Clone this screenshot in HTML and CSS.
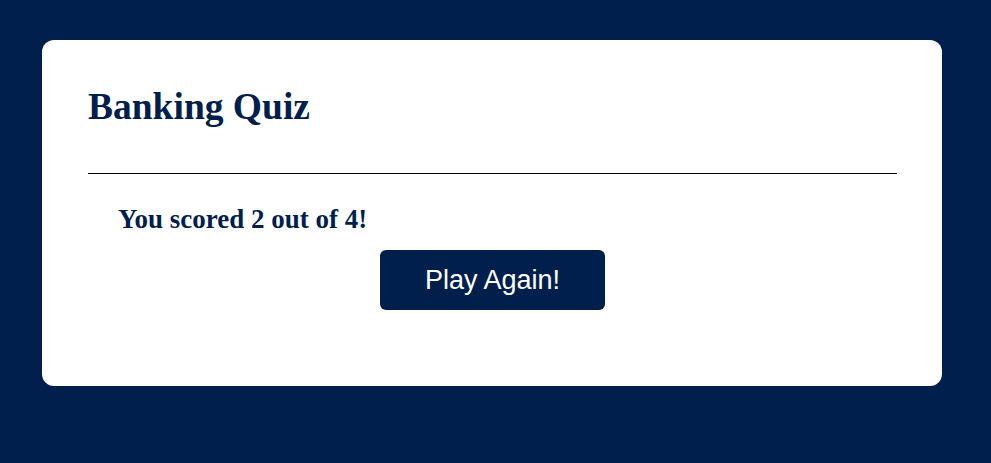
FILE: index.html
```html
<!DOCTYPE html>
<html>
<head>
<meta charset="utf-8">
<link rel="stylesheet" href="styles.css">
</head>
<body>
<div class="card">
  <h1 class="title">Banking Quiz</h1>
  <hr class="rule">
  <div class="result">
    <p class="score">You scored 2 out of 4!</p>
    <button class="again">Play Again!</button>
  </div>
</div>
</body>
</html>
```
FILE: styles.css
```css
html, body {
  margin: 0;
  padding: 0;
  background: #001f4d;
  height: 100%;
}
body {
  padding: 40px 0 0 42px;
  box-sizing: border-box;
}
.card {
  width: 900px;
  height: 346px;
  box-sizing: border-box;
  background: #fff;
  border-radius: 12px;
  padding: 42px 45px 0 46px;
  font-family: "Liberation Serif", "Times New Roman", serif;
  color: #001f4d;
}
.title {
  margin: 0;
  font-size: 37.5px;
  line-height: 50px;
  font-weight: bold;
}
.rule {
  margin: 41px 0 0;
  border: 0;
  border-top: 1px solid #000;
  height: 0;
}
.result {
  display: flex;
  flex-direction: column;
}
.score {
  margin: 28px 0 0 30px;
  font-size: 27px;
  line-height: 34px;
  font-weight: bold;
}
.again {
  align-self: center;
  margin-top: 14px;
  width: 225px;
  height: 60px;
  border: 0;
  border-radius: 6px;
  background: #001f4d;
  color: #fff;
  font-family: "Liberation Sans", Arial, sans-serif;
  font-size: 27px;
}
```
